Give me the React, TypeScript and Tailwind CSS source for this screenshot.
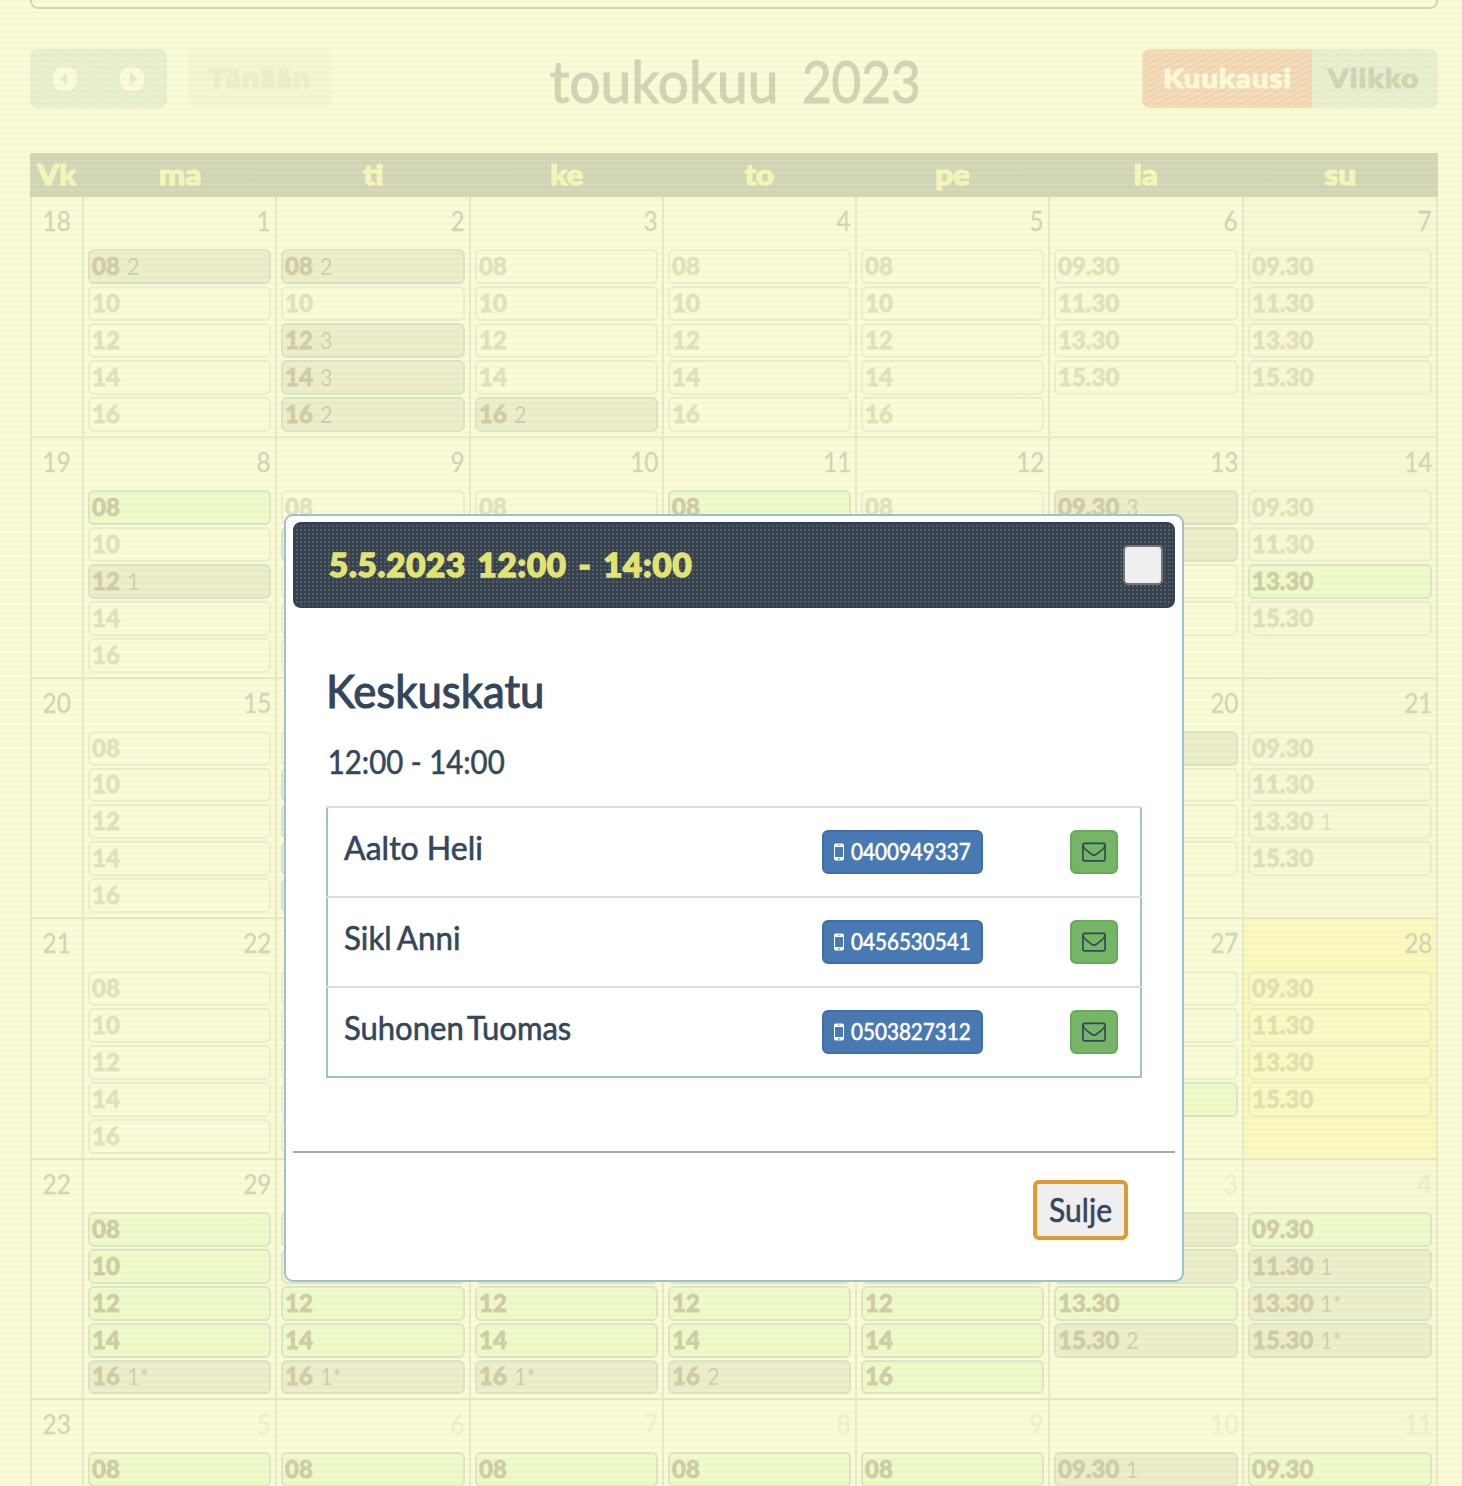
import React from "react";

type Kind = "past" | "busy" | "free";
type Slot = [time: string, kind: Kind, note?: string];
type Day = { n: number; out?: boolean; today?: boolean; slots: Slot[] };
type Week = { vk: number; height: string; days: Day[]; tightAt?: number[] };

const WD = ["08", "10", "12", "14", "16"];
const WE = ["09.30", "11.30", "13.30", "15.30"];

const codes: Record<string, Kind> = { p: "past", b: "busy", f: "free" };

function slots(times: string[], kinds: string, notes: Record<number, string> = {}): Slot[] {
  return kinds.split("").map((k, i) => [times[i], codes[k], notes[i]]);
}

const weeks: Week[] = [
  {
    vk: 18,
    height: "h-[239px]",
    days: [
      { n: 1, slots: slots(WD, "bpppp", { 0: "2" }) },
      { n: 2, slots: slots(WD, "bpbbb", { 0: "2", 2: "3", 3: "3", 4: "2" }) },
      { n: 3, slots: slots(WD, "ppppb", { 4: "2" }) },
      { n: 4, slots: slots(WD, "ppppp") },
      { n: 5, slots: slots(WD, "ppppp") },
      { n: 6, slots: slots(WE, "pppp") },
      { n: 7, slots: slots(WE, "pppp") },
    ],
  },
  {
    vk: 19,
    height: "h-[241px]",
    days: [
      { n: 8, slots: slots(WD, "fpbpp", { 2: "1" }) },
      { n: 9, slots: slots(WD, "pbppp") },
      { n: 10, slots: slots(WD, "ppppp") },
      { n: 11, slots: slots(WD, "fpppp") },
      { n: 12, slots: slots(WD, "ppppp") },
      { n: 13, slots: slots(WE, "bbpp", { 0: "3" }) },
      { n: 14, slots: slots(WE, "ppfp") },
    ],
  },
  {
    vk: 20,
    height: "h-[240px]",
    tightAt: [1],
    days: [
      { n: 15, slots: slots(WD, "ppppp") },
      { n: 16, slots: slots(WD, "pbbbb") },
      { n: 17, slots: slots(WD, "ppppp") },
      { n: 18, slots: slots(WD, "ppppp") },
      { n: 19, slots: slots(WD, "ppppp") },
      { n: 20, slots: slots(WE, "bppp") },
      { n: 21, slots: slots(WE, "pppp", { 2: "1" }) },
    ],
  },
  {
    vk: 21,
    height: "h-[241px]",
    days: [
      { n: 22, slots: slots(WD, "ppppp") },
      { n: 23, slots: slots(WD, "ppppp") },
      { n: 24, slots: slots(WD, "ppppp") },
      { n: 25, slots: slots(WD, "ppppp") },
      { n: 26, slots: slots(WD, "ppppp") },
      { n: 27, slots: slots(WE, "pppf") },
      { n: 28, today: true, slots: slots(WE, "pppp") },
    ],
  },
  {
    vk: 22,
    height: "h-[240px]",
    tightAt: [4],
    days: [
      { n: 29, slots: slots(WD, "ffffb", { 4: "1*" }) },
      { n: 30, slots: slots(WD, "ffffb", { 4: "1*" }) },
      { n: 31, slots: slots(WD, "ffffb", { 4: "1*" }) },
      { n: 1, out: true, slots: slots(WD, "ffffb", { 4: "2" }) },
      { n: 2, out: true, slots: slots(WD, "fffff") },
      { n: 3, out: true, slots: slots(WE, "bbfb", { 3: "2" }) },
      { n: 4, out: true, slots: slots(WE, "fbbb", { 1: "1", 2: "1*", 3: "1*" }) },
    ],
  },
  {
    vk: 23,
    height: "h-[240px]",
    days: [
      { n: 5, out: true, slots: slots(WD, "f") },
      { n: 6, out: true, slots: slots(WD, "f") },
      { n: 7, out: true, slots: slots(WD, "f") },
      { n: 8, out: true, slots: slots(WD, "f") },
      { n: 9, out: true, slots: slots(WD, "f") },
      { n: 10, out: true, slots: slots(WE, "b", { 0: "1" }) },
      { n: 11, out: true, slots: slots(WE, "f") },
    ],
  },
];

const kindClass: Record<Kind, string> = {
  past: "border-[#6b9aae] bg-white/50 opacity-55",
  busy: "border-[#5a96ae] bg-[#bebec3]",
  free: "border-[#6b9aae] bg-[#c3ffba]",
};

const COLS = "grid grid-cols-[52px_193px_194px_193px_193px_193px_194px_194px]";
const DOTS =
  "bg-[radial-gradient(circle_at_center,rgba(255,255,255,0.15)_0.8px,transparent_1.5px)] bg-[length:4px_4px]";
const DIAGONALS =
  "bg-[repeating-linear-gradient(155deg,rgba(255,255,255,0.24)_0_2px,transparent_2px_5px)]";
const HEAVY = "font-black [-webkit-text-stroke:1.100px_currentColor]";
const BOLD = "font-black [-webkit-text-stroke:0.800px_currentColor]";
const MEDIUM = "font-normal [-webkit-text-stroke:0.600px_currentColor]";

function Event({ slot, tight }: { slot: Slot; tight: boolean }) {
  const [time, kind, note] = slot;
  return (
    <div
      className={`flex shrink-0 items-center rounded-[6px] border-2 pb-[2px] pl-[2px] text-[24px] leading-none ${
        tight ? "h-[34px]" : "h-[35px]"
      } ${kindClass[kind]}`}
    >
      <span className={`${BOLD} text-[#2e1c10]`}>{time}</span>
      {note && (
        <span className="ml-[7px] inline-block origin-left scale-x-90 font-normal text-[#2a2a1c]">{note}</span>
      )}
    </div>
  );
}

function DayCell({ day, sunday, tightAt }: { day: Day; sunday: boolean; tightAt: number[] }) {
  const bg = day.today ? "bg-[#fff884]" : sunday ? "bg-[#f1f1f1]" : "";
  return (
    <div className={`flex min-w-0 flex-col border-l-2 border-[#aaaaaa] px-1 ${bg}`}>
      <div
        className={`mb-1 flex h-12 shrink-0 items-center justify-end pb-px text-[27px] leading-none ${
          day.out ? "opacity-30" : ""
        }`}
      >
        <span className="inline-block origin-right scale-x-[0.9] [-webkit-text-stroke:0.300px_currentColor]">
          {day.n}
        </span>
      </div>
      <div className="flex flex-col gap-[2px]">
        {day.slots.map((s, i) => (
          <Event key={i} slot={s} tight={tightAt.includes(i)} />
        ))}
      </div>
    </div>
  );
}

function CircleArrow({ left }: { left?: boolean }) {
  return (
    <svg width="26" height="26" viewBox="0 0 26 26">
      <rect x="1" y="1" width="24" height="24" rx="9.5" fill="#fff" />
      <path d={left ? "M15 6.500v13l-7-6.500z" : "M11 6.500v13l7-6.500z"} fill="#8bb8c9" />
    </svg>
  );
}

function Toolbar() {
  return (
    <div className="mt-10 grid h-[59px] grid-cols-[1fr_auto_1fr] items-center">
      <div className="flex gap-[21px]">
        <div className={`flex h-[59px] w-[137px] items-center rounded-[8px] border-2 border-[#9bc3d2] bg-[#9bc3d2] ${DIAGONALS}`}>
          <span className="ml-5">
            <CircleArrow left />
          </span>
          <span className="ml-[41px]">
            <CircleArrow />
          </span>
        </div>
        <div className={`flex h-[59px] w-[143px] items-center justify-center rounded-[8px] bg-[#e6e6e6] text-[27px] tracking-[1.200px] text-[#c8bea0] ${HEAVY}`}>
          <span className="inline-block scale-x-110">Tänään</span>
        </div>
      </div>
      <h2 className="ml-[2px] h-[59px] scale-x-[0.95] pt-[3px] text-[58px] leading-[58px] font-normal whitespace-nowrap text-[#34425a] [-webkit-text-stroke:1.200px_currentColor]">
        toukokuu <span className="inline-block origin-right scale-x-[0.93]">2023</span>
      </h2>
      <div className={`flex justify-end text-[27px] ${HEAVY}`}>
        <div className={`flex h-[59px] w-[170px] items-center justify-center rounded-l-[8px] border-2 border-r-0 border-[#e07068] bg-[#d84a48] tracking-[1px] text-white ${DIAGONALS}`}>
          <span className="inline-block scale-x-[1.080]">Kuukausi</span>
        </div>
        <div className={`flex h-[59px] w-[126px] items-center justify-center rounded-r-[8px] border-2 border-l-0 border-[#a8cbd8] bg-[#9bc3d2] tracking-[1px] text-[#36424a] ${DIAGONALS}`}>
          <span className="inline-block scale-x-110">Viikko</span>
        </div>
      </div>
    </div>
  );
}

function Calendar() {
  return (
    <div className="mt-[45px]">
      <div className={`${COLS} h-11 items-center border-y-2 border-[#34465a] bg-[#3a4858] pr-[2px] text-center text-[28px] leading-none text-[#e6e673] ${HEAVY} ${DOTS}`}>
        <span className="pb-[3px] pl-px">
          <span className="inline-block scale-x-110 tracking-[0.500px]">Vk</span>
        </span>
        {["ma", "ti", "ke", "to", "pe", "la", "su"].map((d) => (
          <span key={d} className="pb-[3px] pl-[2px]">
            <span className="inline-block scale-x-[1.120]">{d}</span>
          </span>
        ))}
      </div>
      <div className="border-r-2 border-[#aaaaaa]">
        {weeks.map((w, i) => (
          <div
            key={w.vk}
            className={`${COLS} ${w.height} ${i ? "border-t-2 border-[#aaaaaa]" : ""}`}
          >
            <div className="flex h-full flex-col items-center border-l-2 border-[#aaaaaa]">
              <div className="flex h-12 items-center pb-px text-[27px] leading-none">
                <span className="inline-block scale-x-[0.9] [-webkit-text-stroke:0.300px_currentColor]">{w.vk}</span>
              </div>
            </div>
            {w.days.map((d, j) => (
              <DayCell key={j} day={d} sunday={j === 6} tightAt={w.tightAt ?? []} />
            ))}
          </div>
        ))}
      </div>
    </div>
  );
}

function MobileIcon() {
  return (
    <svg width="10" height="18" viewBox="0 0 10 18" className="shrink-0">
      <path
        fillRule="evenodd"
        fill="#fff"
        d="M1.700 .5h6.600a1.700 1.700 0 0 1 1.700 1.700v13.600a1.700 1.700 0 0 1-1.700 1.700H1.700A1.700 1.700 0 0 1 0 15.800V2.200A1.700 1.700 0 0 1 1.700 .5zM1 3.900v10.100h8V3.900zM3.600 1.800v.8h2.800v-.8zM5 14.900a.9 .9 0 1 0 0 1.800 .9 .9 0 0 0 0-1.800z"
      />
    </svg>
  );
}

function EnvelopeIcon() {
  return (
    <svg width="24" height="20" viewBox="0 0 24 20" fill="none" stroke="#34465a" strokeWidth="1.700">
      <rect x="0.900" y="1.400" width="22.200" height="17.400" rx="1.600" />
      <path d="M1 3.600C1.300 5.400 2.800 7 4.600 8.400L9.500 12.200C11.300 13.700 12.700 13.700 14.500 12.200L19.400 8.400C21.200 7 22.700 5.400 23 3.600" />
    </svg>
  );
}

const people = [
  { name: "Aalto Heli", phone: "0400949337", fit: "scale-x-[0.970]" },
  { name: "Sikl Anni", phone: "0456530541", fit: "scale-x-[0.950] [word-spacing:-2px]" },
  { name: "Suhonen Tuomas", phone: "0503827312", fit: "scale-x-[0.940] [word-spacing:-4px]" },
];

function Dialog() {
  return (
    <div
      role="dialog"
      className="absolute top-[514px] left-[284px] flex h-[768px] w-[900px] flex-col rounded-[9px] border-2 border-[#9fc1cc] bg-white px-[7px] pt-[6px] text-[#34465a]"
    >
      <div className={`flex h-[86px] shrink-0 items-center justify-between rounded-[8px] border-2 border-[#2f4358] bg-[#37424f] pr-[10px] pl-[34px] ${DOTS}`}>
        <span className="pb-[2px] text-[33px] leading-none font-black tracking-[0.800px] [word-spacing:3px] text-[#e2e375] [-webkit-text-stroke:1.500px_currentColor]">
          5.5.2023 12:00 - 14:00
        </span>
        <button aria-label="Sulje" className="size-10 rounded-[5px] border-2 border-[#767676] bg-[#efefef]" />
      </div>
      <div className="flex flex-col px-[33px]">
        <h3 className="mt-[60px] origin-left scale-x-[0.950] text-[46px] leading-[46px] font-normal [-webkit-text-stroke:1.100px_currentColor]">
          Keskuskatu
        </h3>
        <p className={`mt-[31px] origin-left scale-x-[0.890] pl-[2px] text-[33px] leading-[33px] ${MEDIUM}`}>12:00 - 14:00</p>
        <div className="mt-[28px] h-[272px] border-b-2 border-[#9fc1cc]">
          {people.map((p) => (
            <div key={p.phone}>
              <div className="h-[2px] bg-[#dddddd]" />
              <div className="flex h-[88px] items-center border-x-2 border-[#9fc1cc] pr-[22px] pl-4">
                <span className={`mb-[10px] origin-left text-[33px] leading-none ${p.fit} ${MEDIUM}`}>{p.name}</span>
                <div className="ml-auto flex h-11 w-[161px] items-center gap-[7px] rounded-[6px] border-2 border-[#3f6fa9] bg-[#4879b2] pl-[10px] text-white">
                  <MobileIcon />
                  <span className={`w-[120px] origin-left scale-x-[0.860] pb-[2px] text-[24px] leading-none ${MEDIUM}`}>
                    {p.phone}
                  </span>
                </div>
                <div className="ml-[87px] flex h-11 w-12 items-center justify-center rounded-[6px] border-2 border-[#66ab58] bg-[#74b566]">
                  <EnvelopeIcon />
                </div>
              </div>
            </div>
          ))}
        </div>
      </div>
      <div className="mt-[73px] flex justify-end border-t-2 border-[#a9a9a9] pt-[27px] pr-[47px]">
        <button className={`flex h-[60px] w-[95px] items-center justify-center rounded-[6px] border-4 border-[#dd9a33] bg-[#efefef] pb-[2px] text-[33px] leading-none ${MEDIUM}`}>
          <span className="inline-block scale-x-[0.910]">Sulje</span>
        </button>
      </div>
    </div>
  );
}

export default function App() {
  return (
    <div className="relative h-[1486px] w-[1462px] overflow-hidden bg-white font-[Lato,sans-serif] text-[#34465a]">
      <div className="mr-6 ml-[30px]">
        <div className="h-[9px] rounded-b-[8px] border-2 border-t-0 border-[#2f5a68]" />
        <Toolbar />
        <Calendar />
      </div>
      <div className="absolute inset-0 bg-[repeating-linear-gradient(180deg,#f6f6c1_0_2px,#f9fad8_4px_5px,#f6f6c1_6px)] opacity-80" />
      <Dialog />
    </div>
  );
}
